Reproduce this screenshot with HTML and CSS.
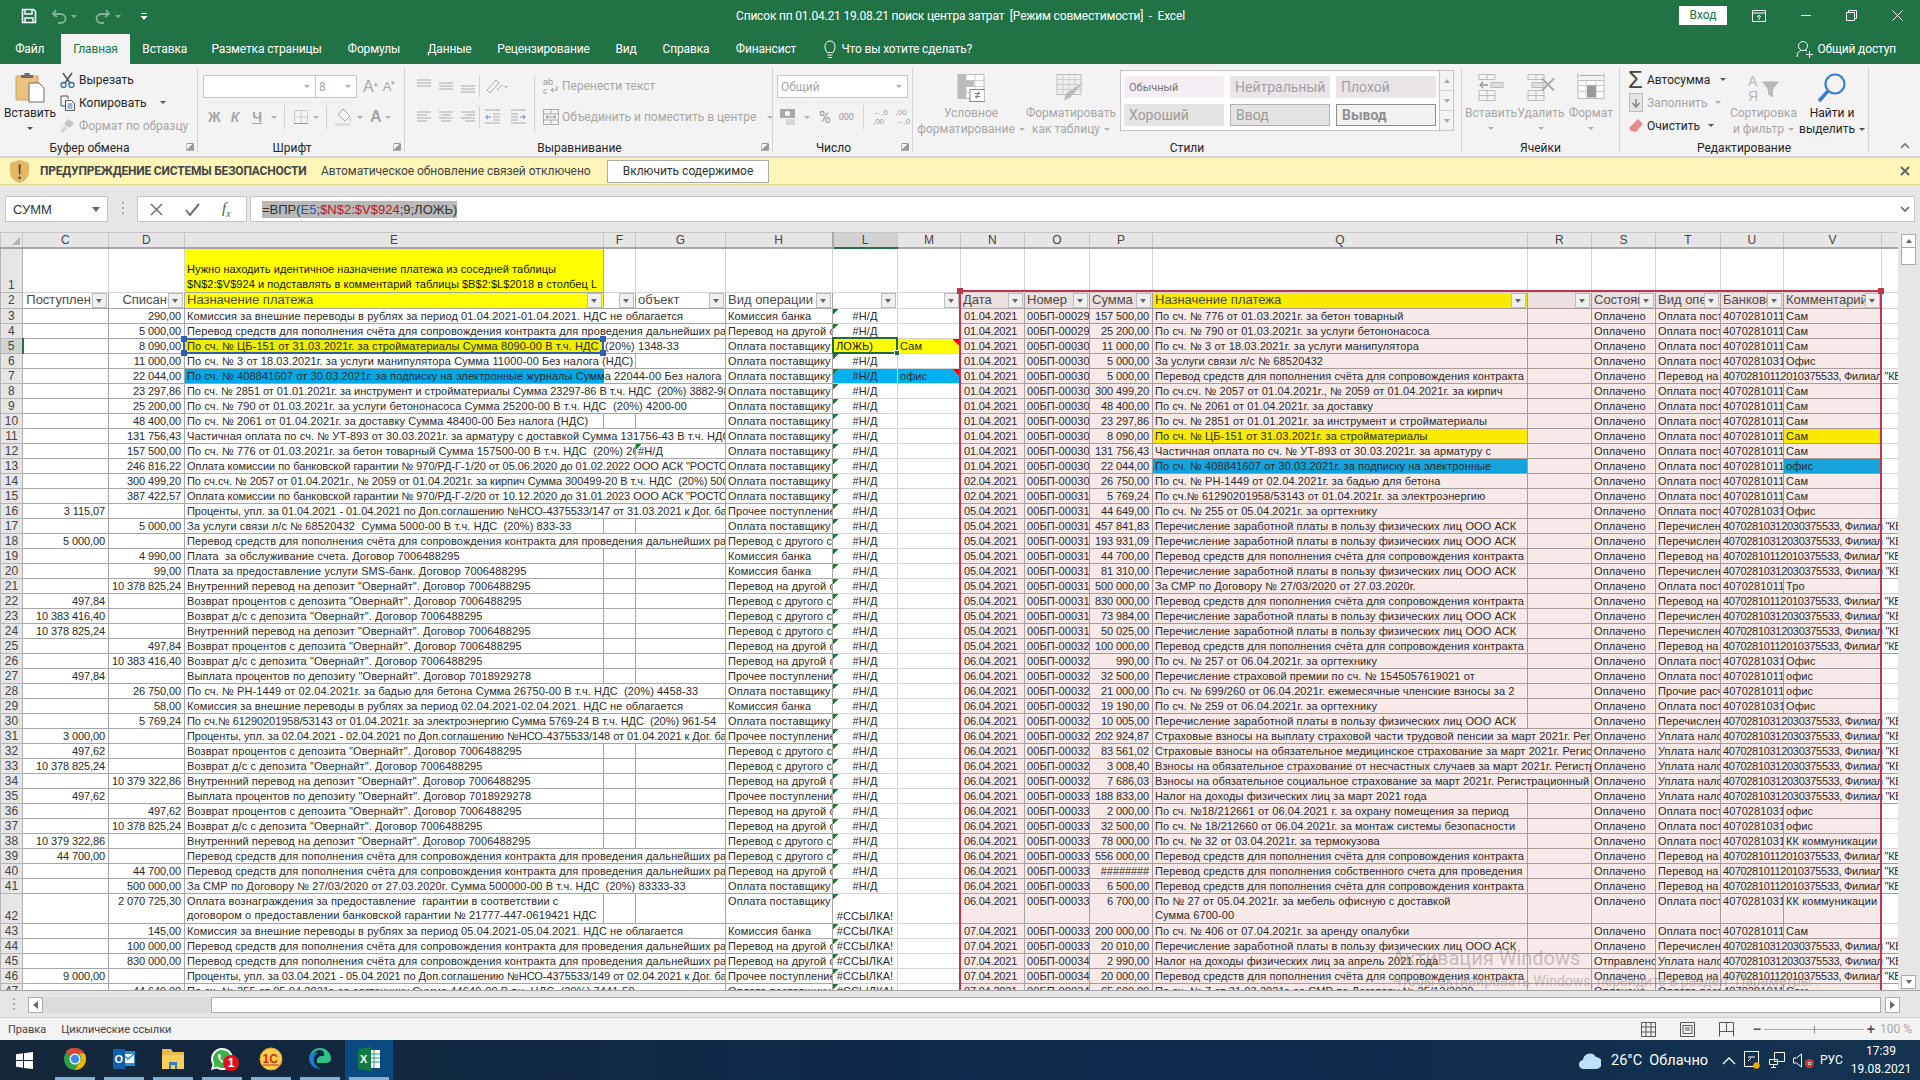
FILE: index.html
```html
<!DOCTYPE html>
<html lang="ru">
<head>
<meta charset="utf-8">
<title>Список пп - Excel</title>
<link rel="stylesheet" href="styles.css">
</head>
<body>
<div class="app">
<header class="titlebar">
  <div class="qat">
    <svg class="ic" width="16" height="16" viewBox="0 0 16 16"><path d="M1.5 1.5h11l2 2v11h-13z" fill="none" stroke="#fff" stroke-width="1.6"/><path d="M4 2v4h7V2M4 15v-5h8v5" fill="none" stroke="#fff" stroke-width="1.4"/></svg>
    <svg class="ic dim" width="30" height="16" viewBox="0 0 30 16"><path d="M5 2 2 6l4 3M2.5 6H10a4.5 4.5 0 0 1 0 9H7" fill="none" stroke="#7fb596" stroke-width="1.8"/><path d="M20 7h6l-3 3z" fill="#7fb596"/></svg>
    <svg class="ic dim" width="30" height="16" viewBox="0 0 30 16"><path d="M11 2l3 4-4 3M13.500 6H6a4.500 4.500 0 0 0 0 9h3" fill="none" stroke="#7fb596" stroke-width="1.8"/><path d="M20 7h6l-3 3z" fill="#7fb596"/></svg>
    <svg class="ic" width="10" height="10" viewBox="0 0 10 10"><path d="M2 2h6v1H2zM1.500 5h7L5 9z" fill="#fff"/></svg>
  </div>
  <div class="doc-title">Список пп 01.04.21 19.08.21 поиск центра затрат  [Режим совместимости]  -  Excel</div>
  <div class="winctl">
    <span class="signin">Вход</span>
    <span class="wbtn"><svg width="14" height="12" viewBox="0 0 14 12"><path d="M.5.500h13v11H.5zM.5 3h13M7 10V5M5 7l2-2 2 2" fill="none" stroke="#fff"/></svg></span>
    <span class="wbtn"><svg width="11" height="11" viewBox="0 0 11 11"><path d="M1 5.500h10" stroke="#fff"/></svg></span>
    <span class="wbtn"><svg width="11" height="11" viewBox="0 0 11 11"><path d="M.5 2.500h8v8h-8zM2.500 2.500v-2h8v8h-2" fill="none" stroke="#fff"/></svg></span>
    <span class="wbtn"><svg width="11" height="11" viewBox="0 0 11 11"><path d="M.5.500l10 10M10.500.500l-10 10" stroke="#fff"/></svg></span>
  </div>
</header>
<nav class="tabs">
  <span class="tab">Файл</span><span class="tab on">Главная</span><span class="tab">Вставка</span><span class="tab">Разметка страницы</span><span class="tab">Формулы</span><span class="tab">Данные</span><span class="tab">Рецензирование</span><span class="tab">Вид</span><span class="tab">Справка</span><span class="tab">Финансист</span>
  <span class="tell"><svg width="14" height="19" viewBox="0 0 14 19"><path d="M4 12.500C1 9 1 1 7 1s6 8 3 11.500zM4.500 15h5M5 17.500h4" fill="none" stroke="#fff"/></svg>Что вы хотите сделать?</span>
  <span class="share"><svg width="18" height="18" viewBox="0 0 18 18"><circle cx="7" cy="6" r="4.500" fill="none" stroke="#fff"/><path d="M1 17c0-4 2-6 4-6.500M9 10l2 1M10 14.500h7M13.500 11v7" fill="none" stroke="#fff"/></svg>Общий доступ</span>
</nav>
<section class="ribbon">
  <div class="grp g1">
    <div class="body">
      <div class="big paste">
        <svg width="30" height="31" viewBox="0 0 30 31"><rect x="1" y="4" width="22" height="24" rx="1" fill="#e8c27e" stroke="#c9a35f"/><path d="M6 6V3h3.500V1h5v2H18v3z" fill="#6b6b6b"/><path d="M14 11h10l5 5v14H14z" fill="#fff" stroke="#6b6b6b"/></svg>
        <span class="lb">Вставить</span><i class="car"></i>
      </div>
      <div class="list">
        <div class="li"><svg width="15" height="16" viewBox="0 0 15 16"><path d="M3 1l7 10M12 1L5 11" stroke="#555" stroke-width="1.500"/><circle cx="3.500" cy="13" r="2.500" fill="none" stroke="#2a6db5" stroke-width="1.300"/><circle cx="11.500" cy="13" r="2.500" fill="none" stroke="#2a6db5" stroke-width="1.300"/></svg>Вырезать</div>
        <div class="li"><svg width="15" height="16" viewBox="0 0 15 16"><path d="M1 1h7v3M1 1v10h4" fill="none" stroke="#555"/><path d="M5.500 5.500h6l3 3v7h-9z" fill="#fff" stroke="#555"/><path d="M7.500 9h5M7.500 11h5M7.500 13h5" stroke="#2a6db5"/></svg>Копировать<i class="car ml"></i></div>
        <div class="li off"><svg width="15" height="16" viewBox="0 0 15 16"><path d="M8 1l6 4-4 5-6-4z" fill="#c4c4c4"/><path d="M5 7l3 3-5 5-3-2z" fill="#d8d8d8"/></svg>Формат по образцу</div>
      </div>
    </div>
    <div class="glabel lch">Буфер обмена<i class="launch"></i></div>
  </div>
  <div class="grp g2">
    <div class="body col">
      <div class="row r1">
        <span class="fbox fname"><i class="car lt"></i></span><span class="fbox fsize">8<i class="car lt"></i></span>
        <span class="txtic off gl">A<sup>▴</sup></span><span class="txtic off sm">A<sup>▾</sup></span>
      </div>
      <div class="row r2">
        <span class="txtic off b">Ж</span><span class="txtic off i">К</span><span class="txtic off u">Ч</span><i class="car lt"></i><span class="sep"></span>
        <svg width="18" height="18" viewBox="0 0 18 18"><path d="M2.500 2.500h13v13h-13zM9 2.500v13M2.500 9h13" fill="none" stroke="#aaa" stroke-dasharray="1 1"/><path d="M2 15.500h14" stroke="#999"/></svg><i class="car lt"></i><span class="sep"></span>
        <svg width="20" height="20" viewBox="0 0 20 20"><path d="M9 2l7 7-5 5-7-6z" fill="none" stroke="#aaa"/><path d="M16 10c1 2 2 3 1 4s-2-1-1-4z" fill="#bbb"/><rect x="1" y="16" width="15" height="3" fill="#dcdcdc"/></svg><i class="car lt"></i>
        <span class="txtic off big-a">A</span><i class="car lt"></i>
      </div>
    </div>
    <div class="glabel lch">Шрифт<i class="launch"></i></div>
  </div>
  <div class="grp g3">
    <div class="body">
      <div class="col aln">
        <div class="row"><svg class="ali" viewBox="0 0 16 14" width="16" height="14"><path d="M1 1h14M1 4h14M1 7h14" stroke="#aaa"/></svg><svg class="ali" viewBox="0 0 16 14" width="16" height="14"><path d="M1 4h14M1 7h14M1 10h14" stroke="#aaa"/></svg><svg class="ali" viewBox="0 0 16 14" width="16" height="14"><path d="M1 7h14M1 10h14M1 13h14" stroke="#aaa"/></svg><span class="sep"></span><svg width="24" height="18" viewBox="0 0 24 18"><path d="M3 13L12 3l3 3-9 10zM13 13l5-5" fill="none" stroke="#aaa"/><path d="M20 9h4l-2 2.500z" fill="#bbb"/></svg></div>
        <div class="row"><svg class="ali" viewBox="0 0 16 14" width="16" height="14"><path d="M1 2h14M1 5h10M1 8h14M1 11h10" stroke="#aaa"/></svg><svg class="ali" viewBox="0 0 16 14" width="16" height="14"><path d="M1 2h14M3 5h10M1 8h14M3 11h10" stroke="#aaa"/></svg><svg class="ali" viewBox="0 0 16 14" width="16" height="14"><path d="M1 2h14M5 5h10M1 8h14M5 11h10" stroke="#aaa"/></svg><span class="sep"></span><svg width="17" height="16" viewBox="0 0 17 16"><path d="M1 1h15M9 5h7M9 8h7M9 11h7M1 14h15" stroke="#aaa"/><path d="M7 8H2m2-2L1.500 8 4 10" fill="none" stroke="#6f8fb5"/></svg><svg class="ind" width="17" height="16" viewBox="0 0 17 16"><path d="M1 1h15M1 5h7M1 8h7M1 11h7M1 14h15" stroke="#aaa"/><path d="M10 8h5m-2-2 2.500 2L13 10" fill="none" stroke="#6f8fb5"/></svg></div>
      </div>
      <span class="sep tall"></span>
      <div class="col wrapc">
        <div class="row off tx"><svg width="16" height="18" viewBox="0 0 16 18"><text x="0" y="8" font-size="9" font-family="Liberation Sans" fill="#999">ab</text><text x="0" y="17" font-size="9" font-family="Liberation Sans" fill="#999">c</text><path d="M14 9v4H8m2-2-2 2 2 2" fill="none" stroke="#999"/></svg>Перенести текст</div>
        <div class="row off tx"><svg width="16" height="16" viewBox="0 0 16 16"><path d="M.5.500h15v15H.5zM.5 5h15M.5 11h15M8 .5V5M8 11v4.500" fill="none" stroke="#aaa"/><path d="M3 8h10M3 8l2-1.500M3 8l2 1.500M13 8l-2-1.500M13 8l-2 1.500" stroke="#999" fill="none"/></svg>Объединить и поместить в центре<i class="car lt ml2"></i></div>
      </div>
    </div>
    <div class="glabel lch">Выравнивание<i class="launch"></i></div>
  </div>
  <div class="grp g4">
    <div class="body col">
      <div class="row"><span class="fbox fmt off">Общий<i class="car lt"></i></span></div>
      <div class="row nums off">
        <svg width="20" height="18" viewBox="0 0 20 18"><rect x="1" y="1" width="15" height="9" fill="#aaa"/><circle cx="8.500" cy="5.500" r="2.500" fill="#fff"/><path d="M7 12h9M7 14h9M7 16h9" stroke="#bbb"/></svg><i class="car lt"></i>
        <span class="pct">%</span><span class="k">000</span><span class="sep"></span>
        <span class="dec">←,0<br>,00</span><span class="dec">,00<br>→,0</span>
      </div>
    </div>
    <div class="glabel lch">Число<i class="launch"></i></div>
  </div>
  <div class="grp g5">
    <div class="body">
      <div class="big cf off">
        <svg width="28" height="28" viewBox="0 0 28 28"><rect x="1" y="1" width="26" height="24" fill="#fff" stroke="#bbb"/><path d="M1 7h26M1 13h26M1 19h26M9 1v24M18 1v24" stroke="#ccc"/><path d="M1 1h8v6h8v6H1zM1 13h8v12H1z" fill="#bbb"/><rect x="13" y="16" width="15" height="12" fill="#fff" stroke="#888"/><path d="M18 20h5M18 23h5M19 25l3-7" stroke="#777"/></svg>
        <span class="lb">Условное</span><span class="lb">форматирование<i class="car lt in"></i></span>
      </div>
      <div class="big ft off">
        <svg width="30" height="28" viewBox="0 0 30 28"><rect x="1" y="1" width="24" height="20" fill="#eee" stroke="#bbb"/><path d="M1 6h24M1 11h24M1 16h24M7 1v20M13 1v20M19 1v20" stroke="#ccc"/><path d="M28 8 14 24l-6 3 2-7z" fill="#bbb"/></svg>
        <span class="lb">Форматировать</span><span class="lb">как таблицу<i class="car lt in"></i></span>
      </div>
      <div class="gallery">
        <div class="styles">
          <span class="st plain">Обычный</span><span class="st neu">Нейтральный</span><span class="st bad">Плохой</span>
          <span class="st good">Хороший</span><span class="st inp">Ввод</span><span class="st out">Вывод</span>
        </div>
        <div class="gscroll"><span><i class="tri up"></i></span><span><i class="tri"></i></span><span><i class="tri bar"></i></span></div>
      </div>
    </div>
    <div class="glabel">Стили</div>
  </div>
  <div class="grp g6">
    <div class="body">
      <div class="big cell off"><svg width="26" height="28" viewBox="0 0 26 28"><path d="M1 1h16v5H1zM9 1v5M1 17h16v10H1zM1 22h16M9 17v10" fill="none" stroke="#bbb"/><rect x="13" y="9" width="12" height="5" fill="#ddd" stroke="#bbb"/><path d="M10 11.500H2m3-3-3 3 3 3" fill="none" stroke="#999" stroke-width="1.300"/></svg><span class="lb">Вставить</span><i class="car lt"></i></div>
      <div class="big cell off"><svg width="28" height="28" viewBox="0 0 28 28"><path d="M1 1h16v5H1zM9 1v5M1 17h16v10H1zM1 22h16M9 17v10" fill="none" stroke="#bbb"/><rect x="5" y="9" width="12" height="5" fill="#ddd" stroke="#bbb"/><path d="M15 5l12 12M27 5 15 17" stroke="#aaa" stroke-width="2"/></svg><span class="lb">Удалить</span><i class="car lt"></i></div>
      <div class="big cell off"><svg width="28" height="30" viewBox="0 0 28 30"><path d="M1 1v5M27 1v5M3 3h22" stroke="#aaa" fill="none"/><rect x="1" y="8" width="26" height="18" fill="#fff" stroke="#bbb"/><path d="M1 13h26M1 19h26M9 8v18M19 8v18" stroke="#ccc"/><rect x="10" y="13" width="9" height="12" fill="#999"/></svg><span class="lb">Формат</span><i class="car lt"></i></div>
    </div>
    <div class="glabel">Ячейки</div>
  </div>
  <div class="grp g7">
    <div class="body">
      <div class="list edit">
        <div class="li"><span class="sigma">Σ</span>Автосумма<i class="car ml3"></i></div>
        <div class="li off"><svg width="14" height="19" viewBox="0 0 14 19"><rect x=".5" y=".5" width="13" height="18" fill="#e4e4e4" stroke="#bbb"/><path d="M7 6v8M3.500 10 7 14l3.500-4" fill="none" stroke="#888" stroke-width="1.500"/></svg>Заполнить<i class="car lt in"></i></div>
        <div class="li"><svg width="14" height="16" viewBox="0 0 14 16"><path d="M9 1l5 5-7 8-5-1-2-3z" fill="#e58a90"/></svg>Очистить<i class="car in"></i></div>
      </div>
      <div class="big sort off"><svg width="32" height="30" viewBox="0 0 32 30"><text x="0" y="13" font-size="14" font-family="Liberation Sans" fill="#b8b8b8">А</text><text x="0" y="28" font-size="14" font-family="Liberation Sans" fill="#b8b8b8">Я</text><path d="M14 9h17l-6 8v8l-5-3v-5z" fill="#b8b8b8"/></svg><span class="lb">Сортировка</span><span class="lb">и фильтр<i class="car lt in"></i></span></div>
      <div class="big find"><svg width="30" height="31" viewBox="0 0 30 31"><circle cx="18" cy="12" r="9.500" fill="none" stroke="#3d7fc4" stroke-width="2.200"/><path d="M11 19 2 29" stroke="#3d7fc4" stroke-width="3.500"/></svg><span class="lb">Найти и</span><span class="lb">выделить<i class="car in"></i></span></div>
    </div>
    <div class="glabel">Редактирование</div>
  </div>
  <div class="collapse"><svg width="10" height="7" viewBox="0 0 10 7"><path d="M1 6l4-4 4 4" fill="none" stroke="#777" stroke-width="1.600"/></svg></div>
</section>
<section class="msgbar">
  <svg width="19" height="23" viewBox="0 0 19 23"><path d="M9.500 0 19 3v9c0 5-4 9-9.500 11C4 21 0 17 0 12V3z" fill="#e3b766"/><path d="M8.500 4.500h2.200l-.4 10H9zM8.500 16.500h2.200v2.500H8.500z" fill="#5a4a2a"/></svg>
  <b>ПРЕДУПРЕЖДЕНИЕ СИСТЕМЫ БЕЗОПАСНОСТИ</b>
  <span class="msgtext">Автоматическое обновление связей отключено</span>
  <span class="msgbtn">Включить содержимое</span>
  <svg class="msgx" width="10" height="10" viewBox="0 0 10 10"><path d="M1 1l8 8M9 1 1 9" stroke="#666" stroke-width="2"/></svg>
</section>
<section class="fbar">
  <div class="namebox">СУММ<i class="car dk"></i></div>
  <span class="dots"></span>
  <div class="fxbtns">
    <svg width="13" height="13" viewBox="0 0 13 13"><path d="M1 1l11 11M12 1 1 12" stroke="#707070" stroke-width="1.500"/></svg>
    <svg width="15" height="13" viewBox="0 0 15 13"><path d="M1 7l4 5L14 1" fill="none" stroke="#707070" stroke-width="2"/></svg>
    <em>f<sub>x</sub></em>
  </div>
  <div class="formula"><span class="fsel">=ВПР(<span class="fb">E5</span>;<span class="fr">$N$2:$V$924</span>;9;ЛОЖЬ)</span><svg width="10" height="7" viewBox="0 0 10 7"><path d="M1 1l4 4 4-4" fill="none" stroke="#666" stroke-width="1.600"/></svg></div>
</section>
<main class="workspace">
<div class="sheet">
<table class="grid">
<colgroup><col class="c0"><col class="cC"><col class="cD"><col class="cE"><col class="cF"><col class="cG"><col class="cH"><col class="cL"><col class="cM"><col class="cN"><col class="cO"><col class="cP"><col class="cQ"><col class="cR"><col class="cS"><col class="cT"><col class="cU"><col class="cV"><col class="cW"></colgroup>
<tr class="hd"><th class="corner"><i></i><th>C<th>D<th>E<th>F<th>G<th class="hH">H<th class="act">L<th>M<th>N<th>O<th>P<th>Q<th>R<th>S<th>T<th>U<th>V<th></tr>
<tr class="r1row"><th>1<td class="l"><td class="l"><td class="note">Нужно находить идентичное назначение платежа из соседней таблицы<br>$N$2:$V$924 и подставлять в комментарий таблицы $B$2:$L$2018 в столбец L<td class="l"><td class="l"><td class="l"><td class="l"><td class="l"><td class="l"><td class="l"><td class="l"><td class="l"><td class="l"><td class="l"><td class="l"><td class="l"><td class="l"><td class="l"></tr>
<tr class="r2row"><th>2
<td><div class="h ra"><span>Поступлен</span><i></i></div>
<td><div class="h ra"><span>Списан</span><i></i></div>
<td class="y"><div class="h"><span>Назначение платежа</span><i></i></div>
<td><div class="h"><span></span><i></i></div>
<td><div class="h"><span>объект</span><i></i></div>
<td><div class="h"><span>Вид операции</span><i></i></div>
<td class="l"><div class="h"><span></span><i></i></div>
<td class="l"><div class="h"><span></span><i></i></div>
<td class="n"><div class="h"><span>Дата</span><i></i></div>
<td><div class="h"><span>Номер</span><i></i></div>
<td><div class="h"><span>Сумма</span><i></i></div>
<td class="y2"><div class="h"><span>Назначение платежа</span><i></i></div>
<td><div class="h"><span></span><i></i></div>
<td><div class="h"><span>Состояние</span><i></i></div>
<td><div class="h"><span>Вид операции</span><i></i></div>
<td><div class="h"><span>Банковский</span><i></i></div>
<td><div class="h"><span>Комментарий</span><i></i></div>
<td class="w"></tr>
<tr><th>3<td><td class="r">290,00<td colspan="3">Комиссия за внешние переводы в рублях за период 01.04.2021-01.04.2021. НДС не облагается<td>Комиссия банка<td class="t">#Н/Д<td class="l"><td class="n">01.04.2021<td>00БП-000298<td class="r">157 500,00<td>По сч. № 776 от 01.03.2021г. за бетон товарный<td><td>Оплачено<td>Оплата поставщику<td>40702810112010375533<td>Сам<td class="w"></tr>
<tr><th>4<td><td class="r">5 000,00<td colspan="3">Перевод средств для пополнения счёта для сопровождения контракта для проведения дальнейших расчетов<td>Перевод на другой счет<td class="t">#Н/Д<td class="l"><td class="n">01.04.2021<td>00БП-000299<td class="r">25 200,00<td>По сч. № 790 от 01.03.2021г. за услуги бетононасоса<td><td>Оплачено<td>Оплата поставщику<td>40702810112010375533<td>Сам<td class="w"></tr>
<tr class="ar"><th>5<td><td class="r">8 090,00<td colspan="3" class="fe y3">По сч. № ЦБ-151 от 31.03.2021г. за стройматериалы Сумма 8090-00 В т.ч. НДС  (20%) 1348-33<td>Оплата поставщику<td class="fy ed">ЛОЖЬ)<td class="fy cm">Сам<td class="n">01.04.2021<td>00БП-000300<td class="r">11 000,00<td>По сч. № 3 от 18.03.2021г. за услуги манипулятора<td><td>Оплачено<td>Оплата поставщику<td>40702810112010375533<td>Сам<td class="w"></tr>
<tr><th>6<td><td class="r">11 000,00<td colspan="2">По сч. № 3 от 18.03.2021г. за услуги манипулятора Сумма 11000-00 Без налога (НДС)<td><td>Оплата поставщику<td class="t">#Н/Д<td class="l"><td class="n">01.04.2021<td>00БП-000301<td class="r">5 000,00<td>За услуги связи л/с № 68520432<td><td>Оплачено<td>Оплата поставщику<td>40702810312030375533<td>Офис<td class="w"></tr>
<tr><th>7<td><td class="r">22 044,00<td colspan="3" class="fe bl">По сч. № 408841607 от 30.03.2021г. за подписку на электронные журналы Сумма 22044-00 Без налога (НДС)<td>Оплата поставщику<td class="t fb2">#Н/Д<td class="fb2 cm">офис<td class="n">01.04.2021<td>00БП-000302<td class="r">5 000,00<td>Перевод средств для пополнения счёта для сопровождения контракта<td><td>Оплачено<td>Перевод на другой счет<td colspan="3" class="ov">40702810112010375533, Филиал "КБ Ростовский"</tr>
<tr><th>8<td><td class="r">23 297,86<td colspan="3" class="d">По сч. № 2851 от 01.01.2021г. за инструмент и стройматериалы Сумма 23297-86 В т.ч. НДС  (20%) 3882-98<td>Оплата поставщику<td class="t">#Н/Д<td class="l"><td class="n">01.04.2021<td>00БП-000303<td class="r">300 499,20<td>По сч.сч. № 2057 от 01.04.2021г., № 2059 от 01.04.2021г. за кирпич<td><td>Оплачено<td>Оплата поставщику<td>40702810112010375533<td>Сам<td class="w"></tr>
<tr><th>9<td><td class="r">25 200,00<td colspan="3">По сч. № 790 от 01.03.2021г. за услуги бетононасоса Сумма 25200-00 В т.ч. НДС  (20%) 4200-00<td>Оплата поставщику<td class="t">#Н/Д<td class="l"><td class="n">01.04.2021<td>00БП-000304<td class="r">48 400,00<td>По сч. № 2061 от 01.04.2021г. за доставку<td><td>Оплачено<td>Оплата поставщику<td>40702810112010375533<td>Сам<td class="w"></tr>
<tr><th>10<td><td class="r">48 400,00<td>По сч. № 2061 от 01.04.2021г. за доставку Сумма 48400-00 Без налога (НДС)<td><td><td>Оплата поставщику<td class="t">#Н/Д<td class="l"><td class="n">01.04.2021<td>00БП-000305<td class="r">23 297,86<td>По сч. № 2851 от 01.01.2021г. за инструмент и стройматериалы<td><td>Оплачено<td>Оплата поставщику<td>40702810112010375533<td>Сам<td class="w"></tr>
<tr><th>11<td><td class="r">131 756,43<td colspan="3">Частичная оплата по сч. № УТ-893 от 30.03.2021г. за арматуру с доставкой Сумма 131756-43 В т.ч. НДС (20%) 21959-41<td>Оплата поставщику<td class="t">#Н/Д<td class="l"><td class="n">01.04.2021<td>00БП-000306<td class="r">8 090,00<td class="fy2">По сч. № ЦБ-151 от 31.03.2021г. за стройматериалы<td><td>Оплачено<td>Оплата поставщику<td>40702810112010375533<td class="fy2">Сам<td class="w"></tr>
<tr><th>12<td><td class="r">157 500,00<td colspan="2">По сч. № 776 от 01.03.2021г. за бетон товарный Сумма 157500-00 В т.ч. НДС  (20%) 26250-00<td class="tl">#Н/Д<td>Оплата поставщику<td class="t">#Н/Д<td class="l"><td class="n">01.04.2021<td>00БП-000307<td class="r">131 756,43<td>Частичная оплата по сч. № УТ-893 от 30.03.2021г. за арматуру с<td><td>Оплачено<td>Оплата поставщику<td>40702810112010375533<td>Сам<td class="w"></tr>
<tr><th>13<td><td class="r">246 816,22<td colspan="3" class="d">Оплата комиссии по банковской гарантии № 970/РД-Г-1/20 от 05.06.2020 до 01.02.2022 ООО АСК "РОСТОВ"<td>Оплата поставщику<td class="t">#Н/Д<td class="l"><td class="n">01.04.2021<td>00БП-000308<td class="r">22 044,00<td class="fb3">По сч. № 408841607 от 30.03.2021г. за подписку на электронные<td><td>Оплачено<td>Оплата поставщику<td>40702810112010375533<td class="fb3">офис<td class="w"></tr>
<tr><th>14<td><td class="r">300 499,20<td colspan="3" class="d">По сч.сч. № 2057 от 01.04.2021г., № 2059 от 01.04.2021г. за кирпич Сумма 300499-20 В т.ч. НДС  (20%) 50083-20<td>Оплата поставщику<td class="t">#Н/Д<td class="l"><td class="n">02.04.2021<td>00БП-000309<td class="r">26 750,00<td>По сч. № РН-1449 от 02.04.2021г. за бадью для бетона<td><td>Оплачено<td>Оплата поставщику<td>40702810112010375533<td>Сам<td class="w"></tr>
<tr><th>15<td><td class="r">387 422,57<td colspan="3" class="d">Оплата комиссии по банковской гарантии № 970/РД-Г-2/20 от 10.12.2020 до 31.01.2023 ООО АСК "РОСТОВ"<td>Оплата поставщику<td class="t">#Н/Д<td class="l"><td class="n">02.04.2021<td>00БП-000310<td class="r">5 769,24<td>По сч.№ 61290201958/53143 от 01.04.2021г. за электроэнергию<td><td>Оплачено<td>Оплата поставщику<td>40702810112010375533<td>Сам<td class="w"></tr>
<tr><th>16<td class="r">3 115,07<td><td colspan="3" class="d">Проценты, упл. за 01.04.2021 - 01.04.2021 по Доп.соглашению №НСО-4375533/147 от 31.03.2021 к Дог. банковского счета<td>Прочее поступление<td class="t">#Н/Д<td class="l"><td class="n">05.04.2021<td>00БП-000311<td class="r">44 649,00<td>По сч. № 255 от 05.04.2021г. за оргтехнику<td><td>Оплачено<td>Оплата поставщику<td>40702810312030375533<td>Офис<td class="w"></tr>
<tr><th>17<td><td class="r">5 000,00<td>За услуги связи л/с № 68520432  Сумма 5000-00 В т.ч. НДС  (20%) 833-33<td><td><td>Оплата поставщику<td class="t">#Н/Д<td class="l"><td class="n">05.04.2021<td>00БП-000312<td class="r">457 841,83<td>Перечисление заработной платы в пользу физических лиц ООО АСК<td><td>Оплачено<td>Перечисление<td colspan="3" class="ov">40702810312030375533, Филиал "КБ Ростовский"</tr>
<tr><th>18<td class="r">5 000,00<td><td colspan="3">Перевод средств для пополнения счёта для сопровождения контракта для проведения дальнейших расчетов<td>Перевод с другого счета<td class="t">#Н/Д<td class="l"><td class="n">05.04.2021<td>00БП-000313<td class="r">193 931,09<td>Перечисление заработной платы в пользу физических лиц ООО АСК<td><td>Оплачено<td>Перечисление<td colspan="3" class="ov">40702810312030375533, Филиал "КБ Ростовский"</tr>
<tr><th>19<td><td class="r">4 990,00<td>Плата  за обслуживание счета. Договор 7006488295<td><td><td>Комиссия банка<td class="t">#Н/Д<td class="l"><td class="n">05.04.2021<td>00БП-000314<td class="r">44 700,00<td>Перевод средств для пополнения счёта для сопровождения контракта<td><td>Оплачено<td>Перевод на другой счет<td colspan="3" class="ov">40702810112010375533, Филиал "КБ Ростовский"</tr>
<tr><th>20<td><td class="r">99,00<td>Плата за предоставление услуги SMS-банк. Договор 7006488295<td><td><td>Комиссия банка<td class="t">#Н/Д<td class="l"><td class="n">05.04.2021<td>00БП-000315<td class="r">81 310,00<td>Перечисление заработной платы в пользу физических лиц ООО АСК<td><td>Оплачено<td>Перечисление<td colspan="3" class="ov">40702810312030375533, Филиал "КБ Ростовский"</tr>
<tr><th>21<td><td class="r">10 378 825,24<td>Внутренний перевод на депозит "Овернайт". Договор 7006488295<td><td><td>Перевод на другой счет<td class="t">#Н/Д<td class="l"><td class="n">05.04.2021<td>00БП-000316<td class="r">500 000,00<td>За СМР по Договору № 27/03/2020 от 27.03.2020г.<td><td>Оплачено<td>Оплата поставщику<td>40702810112010375533<td>Тро<td class="w"></tr>
<tr><th>22<td class="r">497,84<td><td>Возврат процентов с депозита "Овернайт". Договор 7006488295<td><td><td>Перевод с другого счета<td class="t">#Н/Д<td class="l"><td class="n">05.04.2021<td>00БП-000317<td class="r">830 000,00<td>Перевод средств для пополнения счёта для сопровождения контракта<td><td>Оплачено<td>Перевод на другой счет<td colspan="3" class="ov">40702810112010375533, Филиал "КБ Ростовский"</tr>
<tr><th>23<td class="r">10 383 416,40<td><td>Возврат д/с с депозита "Овернайт". Договор 7006488295<td><td><td>Перевод с другого счета<td class="t">#Н/Д<td class="l"><td class="n">05.04.2021<td>00БП-000318<td class="r">73 984,00<td>Перечисление заработной платы в пользу физических лиц ООО АСК<td><td>Оплачено<td>Перечисление<td colspan="3" class="ov">40702810312030375533, Филиал "КБ Ростовский"</tr>
<tr><th>24<td class="r">10 378 825,24<td><td>Внутренний перевод на депозит "Овернайт". Договор 7006488295<td><td><td>Перевод с другого счета<td class="t">#Н/Д<td class="l"><td class="n">05.04.2021<td>00БП-000319<td class="r">50 025,00<td>Перечисление заработной платы в пользу физических лиц ООО АСК<td><td>Оплачено<td>Перечисление<td colspan="3" class="ov">40702810312030375533, Филиал "КБ Ростовский"</tr>
<tr><th>25<td><td class="r">497,84<td>Возврат процентов с депозита "Овернайт". Договор 7006488295<td><td><td>Перевод на другой счет<td class="t">#Н/Д<td class="l"><td class="n">05.04.2021<td>00БП-000320<td class="r">100 000,00<td>Перевод средств для пополнения счёта для сопровождения контракта<td><td>Оплачено<td>Перевод на другой счет<td colspan="3" class="ov">40702810112010375533, Филиал "КБ Ростовский"</tr>
<tr><th>26<td><td class="r">10 383 416,40<td>Возврат д/с с депозита "Овернайт". Договор 7006488295<td><td><td>Перевод на другой счет<td class="t">#Н/Д<td class="l"><td class="n">06.04.2021<td>00БП-000321<td class="r">990,00<td>По сч. № 257 от 06.04.2021г. за оргтехнику<td><td>Оплачено<td>Оплата поставщику<td>40702810312030375533<td>Офис<td class="w"></tr>
<tr><th>27<td class="r">497,84<td><td>Выплата процентов по депозиту "Овернайт". Договор 7018929278<td><td><td>Прочее поступление<td class="t">#Н/Д<td class="l"><td class="n">06.04.2021<td>00БП-000322<td class="r">32 500,00<td>Перечисление страховой премии по сч. № 1545057619021 от<td><td>Оплачено<td>Оплата поставщику<td>40702810112010375533<td>офис<td class="w"></tr>
<tr><th>28<td><td class="r">26 750,00<td colspan="3">По сч. № РН-1449 от 02.04.2021г. за бадью для бетона Сумма 26750-00 В т.ч. НДС  (20%) 4458-33<td>Оплата поставщику<td class="t">#Н/Д<td class="l"><td class="n">06.04.2021<td>00БП-000323<td class="r">21 000,00<td>По сч. № 699/260 от 06.04.2021г. ежемесячные членские взносы за 2<td><td>Оплачено<td>Прочие расчеты<td>40702810112010375533<td>офис<td class="w"></tr>
<tr><th>29<td><td class="r">58,00<td colspan="3">Комиссия за внешние переводы в рублях за период 02.04.2021-02.04.2021. НДС не облагается<td>Комиссия банка<td class="t">#Н/Д<td class="l"><td class="n">06.04.2021<td>00БП-000324<td class="r">19 190,00<td>По сч. № 259 от 06.04.2021г. за оргтехнику<td><td>Оплачено<td>Оплата поставщику<td>40702810312030375533<td>Офис<td class="w"></tr>
<tr><th>30<td><td class="r">5 769,24<td colspan="3" class="d">По сч.№ 61290201958/53143 от 01.04.2021г. за электроэнергию Сумма 5769-24 В т.ч. НДС  (20%) 961-54<td>Оплата поставщику<td class="t">#Н/Д<td class="l"><td class="n">06.04.2021<td>00БП-000325<td class="r">10 005,00<td>Перечисление заработной платы в пользу физических лиц ООО АСК<td><td>Оплачено<td>Перечисление<td colspan="3" class="ov">40702810312030375533, Филиал "КБ Ростовский"</tr>
<tr><th>31<td class="r">3 000,00<td><td colspan="3" class="d">Проценты, упл. за 02.04.2021 - 02.04.2021 по Доп.соглашению №НСО-4375533/148 от 01.04.2021 к Дог. банковского счета<td>Прочее поступление<td class="t">#Н/Д<td class="l"><td class="n">06.04.2021<td>00БП-000326<td class="r">202 924,87<td colspan="2">Страховые взносы на выплату страховой части трудовой пенсии за март 2021г. Регистрационный номер<td>Оплачено<td>Уплата налогов<td colspan="3" class="ov">40702810312030375533, Филиал "КБ Ростовский"</tr>
<tr><th>32<td class="r">497,62<td><td>Возврат процентов с депозита "Овернайт". Договор 7006488295<td><td><td>Перевод с другого счета<td class="t">#Н/Д<td class="l"><td class="n">06.04.2021<td>00БП-000327<td class="r">83 561,02<td colspan="2">Страховые взносы на обязательное медицинское страхование за март 2021г. Регистрационный номер<td>Оплачено<td>Уплата налогов<td colspan="3" class="ov">40702810312030375533, Филиал "КБ Ростовский"</tr>
<tr><th>33<td class="r">10 378 825,24<td><td>Возврат д/с с депозита "Овернайт". Договор 7006488295<td><td><td>Перевод с другого счета<td class="t">#Н/Д<td class="l"><td class="n">06.04.2021<td>00БП-000328<td class="r">3 008,40<td colspan="2">Взносы на обязательное страхование от несчастных случаев за март 2021г. Регистрационный номер<td>Оплачено<td>Уплата налогов<td colspan="3" class="ov">40702810312030375533, Филиал "КБ Ростовский"</tr>
<tr><th>34<td><td class="r">10 379 322,86<td>Внутренний перевод на депозит "Овернайт". Договор 7006488295<td><td><td>Перевод на другой счет<td class="t">#Н/Д<td class="l"><td class="n">06.04.2021<td>00БП-000329<td class="r">7 686,03<td colspan="2">Взносы на обязательное социальное страхование за март 2021г. Регистрационный номер<td>Оплачено<td>Уплата налогов<td colspan="3" class="ov">40702810312030375533, Филиал "КБ Ростовский"</tr>
<tr><th>35<td class="r">497,62<td><td>Выплата процентов по депозиту "Овернайт". Договор 7018929278<td><td><td>Прочее поступление<td class="t">#Н/Д<td class="l"><td class="n">06.04.2021<td>00БП-000330<td class="r">188 833,00<td>Налог на доходы физических лиц за март 2021 года<td><td>Оплачено<td>Уплата налогов<td colspan="3" class="ov">40702810312030375533, Филиал "КБ Ростовский"</tr>
<tr><th>36<td><td class="r">497,62<td>Возврат процентов с депозита "Овернайт". Договор 7006488295<td><td><td>Перевод на другой счет<td class="t">#Н/Д<td class="l"><td class="n">06.04.2021<td>00БП-000331<td class="r">2 000,00<td>По сч. №18/212661 от 06.04.2021 г. за охрану помещения за период<td><td>Оплачено<td>Оплата поставщику<td>40702810312030375533<td>офис<td class="w"></tr>
<tr><th>37<td><td class="r">10 378 825,24<td>Возврат д/с с депозита "Овернайт". Договор 7006488295<td><td><td>Перевод на другой счет<td class="t">#Н/Д<td class="l"><td class="n">06.04.2021<td>00БП-000332<td class="r">32 500,00<td>По сч. № 18/212660 от 06.04.2021г. за монтаж системы безопасности<td><td>Оплачено<td>Оплата поставщику<td>40702810312030375533<td>офис<td class="w"></tr>
<tr><th>38<td class="r">10 379 322,86<td><td>Внутренний перевод на депозит "Овернайт". Договор 7006488295<td><td><td>Перевод с другого счета<td class="t">#Н/Д<td class="l"><td class="n">06.04.2021<td>00БП-000333<td class="r">78 000,00<td>По сч. № 32 от 03.04.2021г. за термокузова<td><td>Оплачено<td>Оплата поставщику<td>40702810312030375533<td>КК коммуникации<td class="w"></tr>
<tr><th>39<td class="r">44 700,00<td><td colspan="3">Перевод средств для пополнения счёта для сопровождения контракта для проведения дальнейших расчетов<td>Перевод с другого счета<td class="t">#Н/Д<td class="l"><td class="n">06.04.2021<td>00БП-000334<td class="r">556 000,00<td>Перевод средств для пополнения счёта для сопровождения контракта<td><td>Оплачено<td>Перевод на другой счет<td colspan="3" class="ov">40702810112010375533, Филиал "КБ Ростовский"</tr>
<tr><th>40<td><td class="r">44 700,00<td colspan="3">Перевод средств для пополнения счёта для сопровождения контракта для проведения дальнейших расчетов<td>Перевод на другой счет<td class="t">#Н/Д<td class="l"><td class="n">06.04.2021<td>00БП-000335<td class="r">########<td>Перевод средств для пополнения собственного счета для проведения<td><td>Оплачено<td>Перевод на другой счет<td colspan="3" class="ov">40702810112010375533, Филиал "КБ Ростовский"</tr>
<tr><th>41<td><td class="r">500 000,00<td colspan="3">За СМР по Договору № 27/03/2020 от 27.03.2020г. Сумма 500000-00 В т.ч. НДС  (20%) 83333-33<td>Оплата поставщику<td class="t">#Н/Д<td class="l"><td class="n">06.04.2021<td>00БП-000336<td class="r">6 500,00<td>Перевод средств для пополнения счёта для сопровождения контракта<td><td>Оплачено<td>Перевод на другой счет<td colspan="3" class="ov">40702810112010375533, Филиал "КБ Ростовский"</tr>
<tr class="tall"><th>42<td><td class="r">2 070 725,30<td class="wr">Оплата вознаграждения за предоставление  гарантии в соответствии с<br>договором о предоставлении банковской гарантии № 21777-447-0619421 НДС<td><td><td>Оплата поставщику<td class="t bot">#ССЫЛКА!<td class="l"><td class="n">06.04.2021<td>00БП-000337<td class="r">6 700,00<td class="wr">По № 27 от 05.04.2021г. за мебель офисную с доставкой<br>Сумма 6700-00<td><td>Оплачено<td>Оплата поставщику<td>40702810312030375533<td>КК коммуникации<td class="w"></tr>
<tr><th>43<td><td class="r">145,00<td colspan="3">Комиссия за внешние переводы в рублях за период 05.04.2021-05.04.2021. НДС не облагается<td>Комиссия банка<td class="t">#ССЫЛКА!<td class="l"><td class="n">07.04.2021<td>00БП-000338<td class="r">200 000,00<td>По сч. № 406 от 07.04.2021г. за аренду опалубки<td><td>Оплачено<td>Оплата поставщику<td>40702810112010375533<td>Сам<td class="w"></tr>
<tr><th>44<td><td class="r">100 000,00<td colspan="3">Перевод средств для пополнения счёта для сопровождения контракта для проведения дальнейших расчетов<td>Перевод на другой счет<td class="t">#ССЫЛКА!<td class="l"><td class="n">07.04.2021<td>00БП-000339<td class="r">20 010,00<td>Перечисление заработной платы в пользу физических лиц ООО АСК<td><td>Оплачено<td>Перечисление<td colspan="3" class="ov">40702810312030375533, Филиал "КБ Ростовский"</tr>
<tr><th>45<td><td class="r">830 000,00<td colspan="3">Перевод средств для пополнения счёта для сопровождения контракта для проведения дальнейших расчетов<td>Перевод на другой счет<td class="t">#ССЫЛКА!<td class="l"><td class="n">07.04.2021<td>00БП-000340<td class="r">2 990,00<td>Налог на доходы физических лиц за апрель 2021 года<td><td>Отправлено<td>Уплата налогов<td colspan="3" class="ov">40702810312030375533, Филиал "КБ Ростовский"</tr>
<tr><th>46<td class="r">9 000,00<td><td colspan="3" class="d">Проценты, упл. за 03.04.2021 - 05.04.2021 по Доп.соглашению №НСО-4375533/149 от 02.04.2021 к Дог. банковского счета<td>Прочее поступление<td class="t">#ССЫЛКА!<td class="l"><td class="n">07.04.2021<td>00БП-000341<td class="r">20 000,00<td>Перевод средств для пополнения счёта для сопровождения контракта<td><td>Оплачено<td>Перевод на другой счет<td colspan="3" class="ov">40702810112010375533, Филиал "КБ Ростовский"</tr>
<tr><th>47<td><td class="r">44 649,00<td colspan="3">По сч. № 255 от 05.04.2021г. за оргтехнику Сумма 44649-00 В т.ч. НДС  (20%) 7441-50<td>Оплата поставщику<td class="t">#ССЫЛКА!<td class="l"><td class="n">07.04.2021<td>00БП-000342<td class="r">65 600,00<td>По сч. № 7 от 31.03.2021г. за СМР по Договору № 25/12/2020<td><td>Оплачено<td>Оплата поставщику<td>40702810112010375533<td>Сам<td class="w"></tr>
</table>
<div class="range rblue"><i class="tl"></i><i class="tr"></i><i class="bl"></i><i class="br"></i></div>
<div class="range rred"><i class="tl"></i><i class="tr"></i></div>
<div class="range ractive"><i class="br"></i></div>
</div>
<aside class="vscroll"><span class="vbtn"><i class="tri up"></i></span><span class="vthumb"></span><span class="vtrack"></span><span class="vbtn"><i class="tri"></i></span></aside>
</main>
<section class="hbar">
  <span class="dots"></span>
  <span class="hbtn"><i class="tri lf"></i></span><span class="htrack"></span><span class="hthumb"></span><span class="hbtn"><i class="tri rt"></i></span>
</section>
<footer class="status">
  <span class="st-l">Правка</span><span class="st-l">Циклические ссылки</span>
  <div class="st-r">
    <svg width="15" height="15" viewBox="0 0 15 15"><path d="M.5.500h14v14H.5zM.5 5h14M.5 10h14M5 .5v14M10 .5v14" fill="none" stroke="#555"/></svg>
    <svg width="15" height="15" viewBox="0 0 15 15"><path d="M.5.500h14v14H.5zM3 3.500h9v8H3zM5 6h5M5 8h5" fill="none" stroke="#555"/></svg>
    <svg width="15" height="15" viewBox="0 0 15 15"><path d="M.5 14.500V.5h14v14M.5 9.500h14M7.500.5v9" fill="none" stroke="#555"/></svg>
    <span class="zoomer"><b>−</b><span class="slider"><i></i></span><b>+</b></span>
    <span class="pc">100 %</span>
  </div>
</footer>
<div class="taskbar">
  <svg class="start" width="17" height="17" viewBox="0 0 17 17"><path d="M0 2.300 7 1.300v6.800H0zM8 1.200 17 0v8.100H8zM0 9h7v6.800L0 14.800zM8 9h9v8L8 15.900z" fill="#fff"/></svg>
  <div class="apps">
    <span class="app-i"><svg width="24" height="24" viewBox="0 0 24 24"><circle cx="12" cy="12" r="11" fill="#2f9e44"/><path d="M12 1a11 11 0 0 1 9.500 5.500H12a5.500 5.500 0 0 0-5 3L3 4a11 11 0 0 1 9-3z" fill="#db4437"/><path d="M21.500 6.500A11 11 0 0 1 12 23l5-8.500a5.500 5.500 0 0 0-1-8z" fill="#f4b400"/><circle cx="12" cy="12" r="5.500" fill="#fff"/><circle cx="12" cy="12" r="4.200" fill="#4285f4"/></svg></span>
    <span class="app-i"><svg width="24" height="24" viewBox="0 0 24 24"><rect x="9" y="4" width="14" height="15" fill="#1f8fd8"/><path d="M10 7h12v9H10z" fill="#fff"/><path d="M10 7l6 5 6-5" fill="none" stroke="#1f8fd8" stroke-width="1.500"/><rect x="1" y="2" width="12" height="20" fill="#0f5fb0"/><text x="2.500" y="16" font-size="11" font-weight="700" fill="#fff" font-family="Liberation Sans">O</text></svg></span>
    <span class="app-i"><svg width="24" height="24" viewBox="0 0 24 24"><path d="M1 2h9l2 3h11v17H1z" fill="#e7b94b"/><path d="M1 8h22v14H1z" fill="#f6cf5e"/><path d="M8 15h8v7H8z" fill="#2f7fc5"/><path d="M10 18h4v4h-4z" fill="#f6cf5e"/></svg></span>
    <span class="app-i wa"><svg width="24" height="24" viewBox="0 0 24 24"><path d="M12 1a11 11 0 0 0-9.500 16.500L1 23l5.700-1.500A11 11 0 1 0 12 1z" fill="#fff"/><path d="M12 3a9 9 0 0 0-7.600 13.800L3.500 20.500l3.700-1A9 9 0 1 0 12 3z" fill="#3bb54a"/><path d="M8.500 7c-1 1-1 3 1 6s5 4 6.500 3l.5-2-2-1-1 1c-1 0-3-2-3.500-3.500l1-1-1-2.500z" fill="#fff"/></svg><b class="badge">1</b></span>
    <span class="app-i"><svg width="24" height="24" viewBox="0 0 24 24"><circle cx="12" cy="12" r="11" fill="#f6cf4f" stroke="#d9a02b"/><text x="3.500" y="16" font-size="12" font-weight="700" fill="#d42b1e" font-family="Liberation Sans">1С</text><path d="M4 18h16" stroke="#d42b1e"/></svg></span>
    <span class="app-i"><svg width="24" height="24" viewBox="0 0 24 24"><path d="M12 1a11 11 0 0 1 11 11c0 3-3 4-6 4H9c-1-5 3-8 7-7 1-3-1-6-4-6S3 5 1 12A11 11 0 0 1 12 1z" fill="#2fc28b"/><path d="M1 12c0-5 5-8 9-6-3 1-5 4-4 9 1 4 6 8 10 6A11 11 0 0 1 1 12z" fill="#1481d6"/></svg></span>
    <span class="app-i active"><svg width="24" height="24" viewBox="0 0 24 24"><rect x="8" y="3" width="15" height="18" fill="#fff"/><path d="M12 3v18M17 3v18M8 7h15M8 11h15M8 15h15" stroke="#21a366"/><path d="M1 2 14 0v24L1 22z" fill="#107c41"/><text x="3" y="16" font-size="11" font-weight="700" fill="#fff" font-family="Liberation Sans">X</text></svg></span>
  </div>
  <div class="tray">
    <svg class="cloud" width="22" height="19" viewBox="0 0 22 19"><path d="M5 18a4.500 4.500 0 0 1-1-9 7 7 0 0 1 13-3 6 6 0 0 1 0 12z" fill="#bfe1f6"/></svg>
    <span class="wx">26°C  Облачно</span>
    <svg width="14" height="9" viewBox="0 0 14 9"><path d="M1 8l6-6 6 6" fill="none" stroke="#fff" stroke-width="1.300"/></svg>
    <svg width="16" height="18" viewBox="0 0 16 18"><rect x=".5" y=".5" width="14" height="15" fill="none" stroke="#fff"/><path d="M4 6h7M4 10l3-3" stroke="#fff"/><circle cx="12.500" cy="14.500" r="3.200" fill="#f2a900"/></svg>
    <svg class="net" width="16" height="16" viewBox="0 0 16 16"><path d="M5.500.5h10v9h-10zM.5 7.500h8v5h-8zM4.500 12.500v3M2 15.500h5" fill="none" stroke="#fff"/></svg>
    <span class="vol"><svg width="12" height="15" viewBox="0 0 12 15"><path d="M.5 5v5h3l5 4V1l-5 4z" fill="none" stroke="#fff"/></svg><svg width="9" height="9" viewBox="0 0 9 9"><circle cx="4.500" cy="4.500" r="4.500" fill="#d8352a"/><path d="M3 3l3 3M6 3 3 6" stroke="#fff"/></svg></span>
    <span class="lang">РУС</span>
    <span class="clock">17:39<br>19.08.2021</span>
  </div>
</div>
<div class="wm"><span class="wm1">Активация Windows</span><span class="wm2">Чтобы активировать Windows, перейдите в раздел "Параметры".</span></div>
</div>
</body>
</html>
```

FILE: styles.css
```css
*{box-sizing:border-box}
html,body{margin:0;padding:0;background:#fff}
body{font-family:Roboto,"Open Sans",sans-serif;font-size:12px;color:#262626;overflow:hidden}
.app{width:1920px;height:1080px;display:flex;flex-direction:column;position:relative;overflow:hidden}
svg{flex:none;display:block}
i{font-style:normal}

/* title + tabs */
.titlebar{height:34px;background:#217346;color:#fff;display:grid;grid-template-columns:736px 1fr auto;align-items:center}
.qat{display:flex;align-items:center;padding-left:21px;gap:14px;margin-top:-2px}
.doc-title{font-size:12px;white-space:pre;margin-top:-3px;letter-spacing:-.18px}
.winctl{display:flex;align-items:center;margin-top:-3px}
.signin{width:48px;height:19px;background:#fff;color:#217346;text-align:center;line-height:19px;margin-right:9px}
.wbtn{width:46px;display:flex;justify-content:center}
.tabs{height:30px;background:#217346;color:#fff;display:grid;grid-template-columns:1.500px 56.500px 3px 69px 69.500px 134px 81px 70px 118px 47px 73px 87px 13px auto 1fr;align-items:center;font-size:12px;letter-spacing:-.15px}
.tab{text-align:center;line-height:30px;white-space:nowrap;grid-row:1}
.tab:nth-child(1){grid-column:2}
.tab.on{grid-column:4;background:#f3f3f3;color:#217346;height:30px}
.tab:nth-child(3){grid-column:5}.tab:nth-child(4){grid-column:6}.tab:nth-child(5){grid-column:7}.tab:nth-child(6){grid-column:8}.tab:nth-child(7){grid-column:9}.tab:nth-child(8){grid-column:10}.tab:nth-child(9){grid-column:11}.tab:nth-child(10){grid-column:12}
.tell{grid-column:14;grid-row:1;display:flex;align-items:center;gap:5px;white-space:nowrap}
.share{grid-column:15;grid-row:1;justify-self:end;display:flex;align-items:center;gap:3px;padding-right:24px;white-space:nowrap}

/* ribbon */
.ribbon{height:94px;background:#f3f3f3;border-bottom:2px solid #d4d4d4;display:flex;align-items:flex-start;flex:none}
.grp{height:84px;margin-top:4px;border-right:1px solid #d2d2d2;display:flex;flex-direction:column;flex:none}
.g1{width:198px}.g2{width:207px}.g3{width:368px}.g4{width:140px}.g5{width:549px}.g6{width:158px}.g7{width:249px}
.body{flex:1;display:flex;min-height:0}
.col{flex-direction:column;display:flex}
.row{display:flex;align-items:center}
.glabel{height:14px;line-height:14px;margin-bottom:-3px;text-align:center;white-space:nowrap;position:relative;font-size:12px;color:#262626;flex:none}
.lch{padding-right:18px}
.launch{position:absolute;right:3px;top:2px;width:8px;height:8px;border:1px solid #aaa;border-top-color:transparent;border-right-color:#999;border-left-color:#bbb;background:linear-gradient(135deg,transparent 50%,#999 50%)}
.off{color:#a6a6a6}
.lb{display:block;line-height:16px;white-space:nowrap;text-align:center}
.big{display:flex;flex-direction:column;align-items:center;padding-top:4px;flex:none}
.big svg{height:31px}
.big .lb:first-of-type{margin-top:2px}
.paste{width:60px}
.car{display:inline-block;width:0;height:0;border:3px solid transparent;border-top:3.500px solid #555;border-bottom:0;flex:none}
.car.lt{border-top-color:#b0b0b0}
.big>.car{margin-top:6px}
.in{margin-left:4px;vertical-align:2px}
.ml{margin-left:10px}.ml2{margin-left:8px}.ml3{margin-left:6px}
.list{display:flex;flex-direction:column;width:138px;flex:none}
.li{height:23px;display:flex;align-items:center;gap:4px;white-space:nowrap}
.fbox{display:flex;align-items:center;justify-content:space-between;background:#fff;border:1px solid #c6c6c6;height:23px;padding:0 5px 0 3px;color:#a6a6a6;flex:none}
.fname{width:112px;justify-content:flex-end;border-right:0}
.fsize{width:42px;margin-right:6px}
.fmt{width:131px;margin-left:4px}
.g2 .body{padding:7px 0 0 5px;gap:7px}
.g2 .r1{height:23px}
.g2 .r2{padding-left:5px;height:24px;gap:3px}
.txtic{color:#a6a6a6;font-family:"Liberation Sans",sans-serif;font-weight:400;white-space:nowrap}
.gl{font-size:16px;margin-right:5px}.sm{font-size:13px}
.gl sup,.sm sup{font-size:7px;vertical-align:6px;line-height:0}
.b{font-weight:700;font-size:14px;margin-right:7px}.i{font-style:italic;font-weight:700;font-size:14px;margin-right:10px}.u{font-weight:700;font-size:14px;text-decoration:underline;margin-right:6px}
.big-a{font-size:16px;font-weight:700;margin-left:4px}
.sep{width:1px;height:24px;background:#d2d2d2;margin:0 4px;flex:none}
.g3 .body{padding:8px 0 0 11px}
.aln{gap:11px;width:118px;flex:none}
.aln .row{height:20px;gap:6px}
.aln .sep{margin:0 -2px 0 -3px;height:22px}
.ind{margin-left:3px}
.sep.tall{height:56px;margin:0 8px 0 0}
.wrapc{gap:11px}
.tx{height:20px;gap:3px;white-space:nowrap}
.g4 .body{padding-top:7px;gap:7px}
.nums{padding-left:6px;gap:5px;height:24px}
.pct{font-size:16px;margin-left:4px;color:#999}.k{font-size:9px;color:#999;margin-left:3px}
.nums .sep{margin:0 4px}
.dec{font-size:8px;line-height:9px;color:#999;font-family:"Liberation Sans",sans-serif;margin-right:3px}
.cf{width:116px}
.ft{width:84px}
.gallery{display:flex;margin:2px 0 0 7px;height:61px}
.styles{width:320px;background:#fff;border:1px solid #c6c6c6;display:grid;grid-template-columns:100px 100px 100px;column-gap:6px;row-gap:6px;padding:5px 3px;height:61px;grid-auto-rows:22px}
.st{display:flex;align-items:center;padding-left:5px;white-space:nowrap;font-size:14px;color:#9c9c9c}
.plain{background:#f4edf4;font-size:11px;color:#777}
.neu,.bad{background:#e9e5e8;color:#a6a0a4}
.good{background:#e4e4e4}
.inp{background:#e5e2e5;border:1px solid #b3b3b3}
.out{background:#f1f1f1;border:1px solid #8c8c8c;font-weight:700;color:#909090}
.gscroll{width:14px;display:flex;flex-direction:column;border:1px solid #c6c6c6;border-left:0}
.gscroll span{flex:1;display:flex;align-items:center;justify-content:center;border-bottom:1px solid #d0d0d0}
.gscroll span:last-child{border:0}
.tri{display:block;width:0;height:0;border:3.500px solid transparent;border-top:4px solid #aaa;border-bottom:0}
.tri.up{border-top:0;border-bottom:4px solid #aaa}
.g6 .body{padding-left:4px}
.cell{width:50px}
.edit{width:110px;padding-left:8px}
.edit .li{gap:4px}
.edit .li svg{margin-left:1px}
.sigma{font-size:24px;font-family:"Liberation Sans",sans-serif;line-height:20px;width:15px;color:#444}
.sort{width:67px}
.find{width:70px}
.collapse{margin:78px 0 0 31px}

/* message bar */
.msgbar{height:27px;flex:none;background:#fdf6b8;border-bottom:1px solid #e3dc8e;display:flex;align-items:center;padding-left:10px;white-space:nowrap}
.msgbar b{margin-left:11px;color:#444;font-size:12px;width:281px;letter-spacing:-.2px;font-weight:700}
.msgtext{width:286px;color:#444;letter-spacing:-.05px}
.msgbtn{width:162px;height:23px;background:#fff;border:1px solid #ababab;text-align:center;line-height:20px;color:#333}
.msgx{margin-left:auto;margin-right:10px}

/* formula bar */
.fbar{height:47px;flex:none;background:#e6e6e6;display:flex;align-items:flex-start;padding:11px 0 0 5px}
.namebox{width:103px;height:26px;background:#fff;border:1px solid #c6c6c6;display:flex;align-items:center;justify-content:space-between;padding:0 7px;font:13px "Liberation Sans",sans-serif;color:#333}
.car.dk{border-top-color:#666;border-width:4px;border-top-width:5px;border-bottom:0}
.dots{width:2px;height:14px;margin:6px 13px 0 14px;background:repeating-linear-gradient(#aaa 0 2px,transparent 2px 5px);flex:none}
.fxbtns{width:110px;height:26px;background:#fff;border:1px solid #c6c6c6;display:flex;align-items:center;padding-left:12px;gap:22px;margin-right:3px}
.fxbtns em{font:italic 15px "Liberation Serif",serif;color:#555}
.fxbtns sub{font-size:10px}
.formula{flex:1;margin-right:5px;height:26px;background:#fff;border:1px solid #c6c6c6;display:flex;align-items:center;justify-content:space-between;padding:0 4px 0 11px;font:13px "Liberation Sans",sans-serif;color:#333}
.fsel{background:#b9b9b9;line-height:17px}
.fb{color:#1b5fa8}.fr{color:#c0141c}

/* sheet */
.workspace{height:758px;flex:none;display:flex;background:#e6e6e6}
.sheet{width:1898px;height:758px;overflow:hidden;position:relative;background:#fff;flex:none}
.grid{table-layout:fixed;border-collapse:collapse;width:1898px;font:11px "Liberation Sans",sans-serif;color:#2a2a2a;letter-spacing:.1px}
.c0{width:22px}.cC{width:86px}.cD{width:76px}.cE{width:419px}.cF{width:32px}.cG{width:90px}.cH{width:107px}.cL{width:65px}.cM{width:63px}.cN{width:64px}.cO{width:65px}.cP{width:63px}.cQ{width:375px}.cR{width:64px}.cS{width:64px}.cT{width:65px}.cU{width:63px}.cV{width:98px}.cW{width:17px}
.grid td,.grid th{height:15px;padding:0 0 0 2px;white-space:pre;overflow:hidden;line-height:14px;border:1px solid #a6a6a6;vertical-align:middle}
.grid th{background:#e6e6e6;font-weight:400;text-align:center;padding:0;color:#444;border-color:#b4b4b4;font-size:12px;white-space:nowrap}
.hd th{font-size:12px;border-color:#c6c6c6;border-bottom:2px solid #a6a6a6;height:15px}
.hd .corner{position:relative}
.corner i{position:absolute;right:2px;bottom:2px;width:0;height:0;border-left:8px solid transparent;border-bottom:8px solid #b4b4b4}
.hd .hH{border-right:2px solid #a6a6a6}
.hd .act{background:#d2d2d2;border-bottom:2px solid #217346;color:#1a5c37}
.ar th{background:#d2d2d2;color:#1a5c37;border-right:2px solid #217346}
.r1row td,.r1row th,.tall th{vertical-align:bottom}
.r1row th,.r1row td{height:44px}
.grid .l{border-color:#d4d4d4}
.note{background:#ff0;line-height:15px!important;color:#111;letter-spacing:.05px}
.r2row td,.r2row th{height:16px}
.r2row td{white-space:nowrap}
.r2row th{line-height:15px}
.h{display:flex;height:15px;align-items:center;font-size:13px;color:#4a4a4a;padding-right:1px;letter-spacing:0}
.h span{flex:1;overflow:hidden;white-space:nowrap;min-width:0}
.h i{width:15px;height:15px;flex:none;background:#f0f0f0;border:1px solid #bdbdbd;position:relative}
.h i::after{content:"";position:absolute;left:3px;top:5px;width:0;height:0;border:3.500px solid transparent;border-top:4px solid #666;border-bottom:0}
.ra span{text-align:right;padding-right:1px}
.y{background:#ff0}
.y2{background:#f9ea00!important}
.grid td.r{text-align:right;padding:0 3px 0 0;letter-spacing:-.1px}
.grid td.d{letter-spacing:-.05px}
.t{text-align:center;padding:0!important;border-color:#d4d4d4!important;background:linear-gradient(135deg,#14802e 4px,transparent 4px) no-repeat}
.tl{padding-left:2px;background:linear-gradient(135deg,#14802e 4px,transparent 4px) no-repeat}
.bot{vertical-align:bottom!important}
.fe{background-repeat:no-repeat;background-size:419px 100%}
.y3{background-image:linear-gradient(#eeee00,#eeee00)}
.bl{background-image:linear-gradient(#00a8e8,#00a8e8)}
.fy{background:#ff0}
.ed{padding-left:3px!important;color:#111}
.cm{padding-left:2px!important;border-color:#d4d4d4!important}
.fy.cm{background:linear-gradient(225deg,#f00 5px,transparent 5px) no-repeat,#ff0}
.fb2{background:linear-gradient(135deg,#14802e 4px,transparent 4px) no-repeat,#00b0f0}
.fb2.cm{background:linear-gradient(225deg,#f00 5px,transparent 5px) no-repeat,#00b0f0}
.n,.n~td{background-color:#f8e9e9;border-color:#a89a9a}
.n{padding-left:3px!important;letter-spacing:-.2px}
.r2row .n,.r2row .n~td{background-color:#ecdfdf}
.r2row .n{padding-left:2px!important}
.grid .n~td.w{background:#fff;border-color:#d4d4d4}
.grid td.ov{background:linear-gradient(#f8e9e9,#f8e9e9) no-repeat 0 0/161px 100%,#fff;border-right-color:#d4d4d4;letter-spacing:-.3px}
.grid td.fy2{background:#f9ea00}
.grid td.fb3{background:#14a3dc}
.tall td,.tall th{height:30px}
.tall td{vertical-align:top}
.tall .wr{line-height:14.500px}
.tall td.t{vertical-align:bottom}

.range{position:absolute;pointer-events:none}
.range i{position:absolute;width:6px;height:6px}
.rblue{left:183px;top:106px;width:421px;height:16px;border:2px solid #2f5fb5}
.rblue i{background:#2f5fb5}
.rred{left:959px;top:58px;width:923px;height:710px;border:2px solid #c1344c}
.rred i{background:#c1344c}
.ractive{left:832px;top:105px;width:66px;height:17px;border:2px solid #1e6b41}
.ractive i{background:#1e6b41;border:1px solid #fff;right:-4px;bottom:-4px}
.rblue .tl,.rred .tl{left:-4px;top:-4px}
.rblue .tr,.rred .tr{right:-4px;top:-4px}
.rblue .bl{left:-4px;bottom:-4px}
.rblue .br{right:-4px;bottom:-4px}

.vscroll{width:22px;flex:none;display:flex;flex-direction:column;padding:2px 4px 1px 3px;background:#e6e6e6}
.vbtn{height:14px;background:#fff;border:1px solid #ababab;display:flex;align-items:center;justify-content:center;flex:none}
.vbtn .tri{border-top-color:#666}.vbtn .tri.up{border-bottom-color:#666}
.vthumb{height:17px;background:#fff;border:1px solid #ababab;border-top:0;flex:none}
.vtrack{flex:1}

.hbar{height:28px;flex:none;background:#e6e6e6;border-top:1px solid #a6a6a6;border-bottom:1px solid #d0d0d0;display:flex;align-items:center;padding-top:2px}
.hbar .dots{margin:0 13px 0 13px}
.hbtn{width:15px;height:16px;background:#fff;border:1px solid #ababab;display:flex;align-items:center;justify-content:center;flex:none}
.hbar .hbtn:last-child{margin-left:4px}
.tri.lf{border:4px solid transparent;border-right:5px solid #666;border-left:0}
.tri.rt{border:4px solid transparent;border-left:5px solid #666;border-right:0}
.htrack{width:168px;height:16px;background:#dcdcdc;flex:none}
.hthumb{width:1670px;height:16px;background:#fff;border:1px solid #ababab;flex:none}

.status{height:22px;flex:none;background:#f3f3f3;display:flex;align-items:center;padding-left:8px;gap:15px;color:#444}
.st-l{font-size:11px}
.st-r{margin-left:auto;display:flex;align-items:center;padding-right:8px;gap:24px}
.zoomer{display:flex;align-items:center;gap:3px;margin-left:-5px}
.zoomer b{font:700 14px "Liberation Sans",sans-serif;color:#555}
.slider{display:block;width:100px;height:1px;background:#aaa;position:relative}
.slider i{position:absolute;left:50px;top:-3px;width:1px;height:7px;background:#888}
.pc{color:#aaa;margin-left:-19px}

.taskbar{height:40px;flex:none;background:linear-gradient(90deg,#14273a,#0c2a4c 60%,#13334f);display:flex;align-items:center;color:#fff;padding-left:16px}
.start{flex:none;margin-right:22px}
.apps{display:flex;gap:9px;height:40px}
.app-i{width:40px;height:40px;display:flex;align-items:center;justify-content:center;position:relative;border-bottom:3px solid #86b0cf;padding-top:1px}
.app-i.active{background:#0b4a80;box-shadow:-4px 0 0 #0b4a80,4px 0 0 #0b4a80}
.badge{position:absolute;right:3px;bottom:6px;width:16px;height:16px;border-radius:50%;background:#e2101a;font:700 12px/16px "Liberation Sans",sans-serif;text-align:center;color:#fff}
.tray{margin-left:auto;display:flex;align-items:center;font-size:13px;gap:8px;padding-right:6px}
.wx{white-space:pre;font-size:14.500px;width:96px;margin:0 7px 0 2px}
.net{margin-left:1px}
.vol{display:flex;align-items:flex-end}
.lang{font-size:12px;width:22px;margin:0 -2px 0 -2px}
.clock{text-align:center;line-height:18px;font-size:12px;width:66px}

.wm{position:absolute;left:1392px;top:945px;display:flex;flex-direction:column;color:rgba(120,120,120,.42);pointer-events:none;white-space:nowrap}
.wm1{font-size:20px;line-height:26px}
.wm2{font-size:14px;line-height:19px;margin-top:1px}
```
